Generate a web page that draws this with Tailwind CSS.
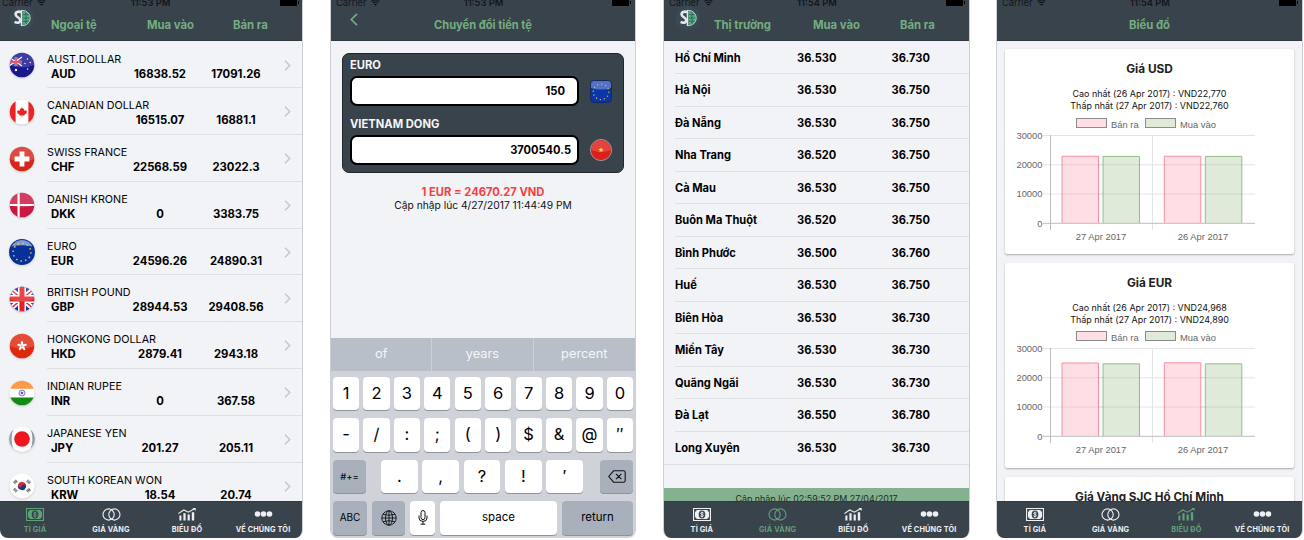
<!DOCTYPE html>
<html lang="vi">
<head>
<meta charset="utf-8">
<title>Tỉ giá</title>
<script src="https://cdn.jsdelivr.net/npm/@tailwindcss/browser@4"></script>
</head>
<body class="w-[1304px] h-[540px] overflow-hidden bg-white font-['Inter','Liberation_Sans',sans-serif] text-black">

<svg width="0" height="0" class="absolute">
  <defs>
    <clipPath id="round"><circle cx="13" cy="13" r="12.3"/></clipPath>
    <symbol id="star" viewBox="-10 -10 20 20"><path d="M0-9.5 2.2-3H9L3.6 1.1 5.6 7.7 0 3.7-5.6 7.7-3.6 1.1-9-3H-2.2Z"/></symbol>
    <symbol id="i-cash" viewBox="0 0 18 13"><path fill="currentColor" fill-rule="evenodd" d="M0 0H18V13H0ZM1.1 1.1V11.9H16.9V1.1Z"/><path fill="currentColor" d="M3.6 2H14.4A1.8 1.8 0 0 0 16 3.7V9.3A1.8 1.8 0 0 0 14.4 11H3.6A1.8 1.8 0 0 0 2 9.3V3.7A1.8 1.8 0 0 0 3.6 2Z"/><ellipse cx="9" cy="6.5" rx="3.3" ry="4.1" fill="#39434c"/><path d="M10.6 5.2C10.2 4.1 7.6 4.2 7.7 5.4 7.8 6.6 10.4 6.3 10.4 7.6 10.3 8.8 7.8 8.8 7.4 7.8M9 3.6V9.5" stroke="currentColor" stroke-width=".9" fill="none"/></symbol>
    <symbol id="i-rings" viewBox="0 0 19 13"><g fill="none" stroke="currentColor" stroke-width="1.1"><circle cx="6.6" cy="6.5" r="5.6"/><circle cx="12.4" cy="6.5" r="5.6"/></g></symbol>
    <symbol id="i-chart" viewBox="0 0 18 13"><path d="M.3 5.6 5.8 2 10.4 4.2 16.4.8" fill="none" stroke="currentColor" stroke-width="1.1"/><path d="M14.4 0H17.7V2.9Z" fill="currentColor"/><path d="M1.4 7.4H3.4V12.6H1.4ZM5.4 5.2H7.6V12.6H5.4ZM9.6 6.4H11.8V12.6H9.6ZM13.8 4.2H16.2V12.6H13.8Z" fill="currentColor"/></symbol>
    <symbol id="i-dots" viewBox="0 0 18 6"><g fill="currentColor"><circle cx="3" cy="3" r="2.8"/><circle cx="9" cy="3" r="2.8"/><circle cx="15" cy="3" r="2.8"/></g></symbol>
    <symbol id="i-logo" viewBox="0 0 26 26"><circle cx="13" cy="13" r="12.3" fill="#3a4a54"/><path d="M13.6 6A7 7 0 0 1 13.6 20Z" fill="#4fae81"/><path d="M14 9.6H20M14 13H20.6M14 16.4H20M17 7V19.2" stroke="#2c5c4d" stroke-width=".8"/><path d="M12.5 5.4H13.6A7.5 7.5 0 0 1 13.6 20.6H12.5" stroke="#c9d6d2" stroke-width="1" fill="none"/><path d="M12 7.3C9.6 6 6.4 6.8 6.6 9.5 6.8 12.4 11.3 12.2 11.2 15.3 11.1 18.2 8 18.2 5.6 16.8" stroke="#e4e8e8" stroke-width="2.6" fill="none"/><path d="M12.5 5V21" stroke="#e4e8e8" stroke-width="1.5"/></symbol>
    <symbol id="i-wifi" viewBox="0 0 9 7"><path d="M.6 2.6A5.6 5.6 0 0 1 8.4 2.6M2.2 4.2A3.4 3.4 0 0 1 6.8 4.2" fill="none" stroke="#12161a" stroke-width="1.2"/><path d="M3.2 5.1H5.8L4.5 6.8Z"/></symbol>

    <symbol id="f-aud" viewBox="0 0 26 26"><g clip-path="url(#round)"><path fill="#16188c" d="M0 0H26V26H0Z"/><path d="M0 5 13 14M13 5 0 14" stroke="#fff" stroke-width="1.2"/><path d="M0 10H13M7 5V14" stroke="#f6c9d2" stroke-width="2.6"/><path d="M0 10H13M7 5V14" stroke="#e0354a" stroke-width="1.8"/><g fill="#fff"><circle cx="7" cy="18" r="1.2"/><circle cx="18.5" cy="7" r=".7"/><circle cx="16" cy="11.5" r=".7"/><circle cx="21.3" cy="10.5" r=".7"/><circle cx="18.6" cy="17" r=".8"/></g></g></symbol>
    <symbol id="f-cad" viewBox="0 0 26 26"><g clip-path="url(#round)"><path fill="#fff" d="M0 0H26V26H0Z"/><path fill="#ee2222" d="M0 0H6.6V26H0ZM19.4 0H26V26H19.4Z"/><path fill="#e62222" d="M13 8 14 10 15.2 9.4 14.8 12 16.3 10.9 16.7 11.8 18 11.7 17.4 13.4 18 13.9 15.3 15.8 15.5 16.7 13.3 16.3V18.4H12.7V16.3L10.5 16.7 10.7 15.8 8 13.9 8.6 13.4 8 11.7 9.3 11.8 9.7 10.9 11.2 12 10.8 9.4 12 10Z"/></g></symbol>
    <symbol id="f-chf" viewBox="0 0 26 26"><g clip-path="url(#round)"><path fill="#d5281d" d="M0 0H26V26H0Z"/><path d="M5.6 13H20.4M13 5.6V20.4" stroke="#fff" stroke-width="4.8"/></g></symbol>
    <symbol id="f-dkk" viewBox="0 0 26 26"><g clip-path="url(#round)"><path fill="#cb163f" d="M0 0H26V26H0Z"/><path d="M0 13H26M9.6 0V26" stroke="#fff" stroke-width="2.2"/></g></symbol>
    <symbol id="f-eur" viewBox="0 0 26 26"><circle cx="13" cy="13" r="13" fill="#07309b"/><path d="M2.6 7.6A11.5 11.5 0 0 1 23.4 7.6Q13 5 2.6 7.6Z" fill="#fff" opacity=".5"/><circle cx="13" cy="13.2" r="8.9" fill="none" stroke="#e2c94a" stroke-width="1.5" stroke-dasharray="1.5 3.16"/></symbol>
    <symbol id="f-gbp" viewBox="0 0 26 26"><g clip-path="url(#round)"><path fill="#2430a6" d="M0 0H26V26H0Z"/><path d="M0 2 26 24M26 2 0 24" stroke="#fff" stroke-width="5"/><path d="M0 2 26 24M26 2 0 24" stroke="#e22a35" stroke-width="1.4"/><path d="M0 13H26M13 0V26" stroke="#fff" stroke-width="8"/><path d="M0 13H26M13 0V26" stroke="#e12225" stroke-width="5"/></g></symbol>
    <symbol id="f-hkd" viewBox="0 0 26 26"><g clip-path="url(#round)"><path fill="#e0280f" d="M0 0H26V26H0Z"/></g><g fill="#fff"><ellipse cx="13" cy="10.4" rx="1.2" ry="2.4"/><ellipse cx="13" cy="10.4" rx="1.2" ry="2.4" transform="rotate(72 13 13)"/><ellipse cx="13" cy="10.4" rx="1.2" ry="2.4" transform="rotate(144 13 13)"/><ellipse cx="13" cy="10.4" rx="1.2" ry="2.4" transform="rotate(216 13 13)"/><ellipse cx="13" cy="10.4" rx="1.2" ry="2.4" transform="rotate(288 13 13)"/></g><circle cx="13" cy="13" r=".6" fill="#e0280f"/></symbol>
    <symbol id="f-inr" viewBox="0 0 26 26"><g clip-path="url(#round)"><path fill="#fff" d="M0 0H26V26H0Z"/><path fill="#fb9a45" d="M0 0H26V8.8H0Z"/><path fill="#138a15" d="M0 17.4H26V26H0Z"/></g><circle cx="13" cy="13" r="3" fill="#dcdcf3" stroke="#6a6ab8" stroke-width=".8"/><circle cx="13" cy="13" r="1.1" fill="#39399c"/></symbol>
    <symbol id="f-jpy" viewBox="0 0 26 26"><circle cx="13" cy="13" r="12.8" fill="#fbfbfb"/><path d="M4.6 3.4A12.6 12.6 0 0 0 4.6 22.6L3.2 19Q2 13 3.2 7ZM21.4 3.4A12.6 12.6 0 0 1 21.4 22.6L22.8 19Q24 13 22.8 7Z" fill="#8d9aa6"/><circle cx="13" cy="13" r="7.8" fill="#ee1420"/></symbol>
    <symbol id="f-krw" viewBox="0 0 26 26"><circle cx="13" cy="13" r="12.5" fill="#fff"/><g transform="rotate(20 13 13)"><path d="M8.9 13A4.1 4.1 0 0 1 17.1 13Z" fill="#d92b3f"/><path d="M8.9 13A4.1 4.1 0 0 0 17.1 13Z" fill="#153b88"/><circle cx="11" cy="13" r="2" fill="#d92b3f"/><circle cx="15" cy="13" r="2" fill="#153b88"/></g><g stroke="#555" stroke-width="3" stroke-dasharray=".9 .5"><path d="M5 10.2 7.8 7.6M18.2 7.6 21 10.2M5 15.9 7.8 18.5M18.2 18.5 21 15.9"/></g></symbol>
    <symbol id="f-vnd" viewBox="0 0 26 26"><circle cx="13" cy="13" r="12.5" fill="#dc1f1a" stroke="#a9a3a4"/><path d="M1.5 13A11.5 11.5 0 0 1 24.5 13Q13 18 1.5 13Z" fill="#fff" opacity=".17"/><use href="#star" x="9.5" y="9.5" width="7" height="7" fill="#ffea1c"/></symbol>
    <symbol id="f-gloss" viewBox="0 0 26 26"><path d="M.7 13A12.3 12.3 0 0 1 25.3 13Q13 18 .7 13Z" fill="#fff" opacity=".17"/></symbol>
  </defs>
</svg>

<main class="flex h-[538px] w-[1303px] gap-[27px]">

  <section class="flex w-[303px] shrink-0 justify-end overflow-hidden rounded-b-[8px] border-r border-[#ccd0d4] bg-[#f2f3f6]">
    <div class="-mr-px flex w-[306px] shrink-0 flex-col">
      <header data-bar="11:53 PM" class="relative h-[41px] shrink-0 border-b border-[#303a42] bg-[#39434c]">
        <svg class="absolute left-[12px] top-[5px] size-[26px]"><use href="#i-logo"/></svg>
        <div class="flex pt-[17px] pl-[54px] text-[11.3px] leading-4 font-bold text-[#74ad80]"><span class="w-[96px]">Ngoại tệ</span><span class="w-[86px]">Mua vào</span><span>Bán ra</span></div>
      </header>
      <div id="rates" class="min-h-0 flex-1 overflow-hidden pt-[0.5px]"></div>
      <nav data-active="0"></nav>
    </div>
  </section>

  <section class="flex w-[306px] shrink-0 flex-col overflow-hidden rounded-b-[8px] border-x border-[#ccd0d4] bg-[#f2f3f6]">
    <header data-bar="11:53 PM" class="relative h-[41px] shrink-0 border-b border-[#303a42] bg-[#39434c]">
      <svg class="absolute left-[19px] top-[13px] h-[13px] w-[8px]" viewBox="0 0 8 13"><path d="M7 .9 1.3 6.5 7 12.1" fill="none" stroke="#74ad80" stroke-width="1.7"/></svg>
      <div class="pt-[17px] text-center text-[11.1px] leading-4 font-bold text-[#74ad80]">Chuyển đổi tiền tệ</div>
    </header>
    <div class="mx-[11px] mt-[12px] h-[120px] shrink-0 rounded-[7px] border border-[#20272d] bg-[#39434c] px-[7px] pt-[3px] text-[11.2px] font-bold">
      <div class="h-[19px] leading-[17px] text-[#f4f6f8]">EURO</div>
      <div class="flex items-center gap-[11px]">
        <div class="h-[30px] w-[229px] rounded-[7px] border-2 border-black bg-white pr-[12px] text-right leading-[26px]">150</div>
        <svg class="h-[23px] w-[22px]" viewBox="0 0 22 23"><rect x=".5" y=".5" width="21" height="22" rx="4" fill="#0a37a8" stroke="#14285f"/><path d="M1 8V4Q1 1 4 1H18Q21 1 21 4V8Q11 11 1 8Z" fill="#fff" opacity=".3"/><circle cx="11" cy="11.8" r="7.8" fill="none" stroke="#ddc04a" stroke-width="1.2" stroke-dasharray="1.2 2.88"/></svg>
      </div>
      <div class="mt-[10px] h-[19px] leading-[17px] text-[#f4f6f8]">VIETNAM DONG</div>
      <div class="flex items-center gap-[11px]">
        <div class="h-[30px] w-[229px] rounded-[7px] border-2 border-black bg-white pr-[6px] text-right text-[11.1px] leading-[26px]">3700540.5</div>
        <svg class="size-[22px]"><use href="#f-vnd"/></svg>
      </div>
    </div>
    <div class="mt-[12px] text-center text-[11.2px] leading-[14px] font-bold text-[#f6403f]">1 EUR = 24670.27 VND</div>
    <div class="text-center text-[10.25px] leading-[13px] text-[#111]">Cập nhập lúc 4/27/2017 11:44:49 PM</div>
    <div class="mt-auto flex h-[33px] shrink-0 bg-[#b8bfc8] text-center text-[12.8px] leading-[31px] text-[#f4f6f8]">
      <span class="w-[101px]">of</span><span class="w-[103px] border-x border-[#cbd1d8]">years</span><span class="w-[102px]">percent</span>
    </div>
    <div id="keys" class="flex h-[167px] shrink-0 flex-col gap-[8px] bg-[#cfd2d9] px-[2px] pt-[6px] text-[16.5px] leading-[33px]"></div>
  </section>

  <section class="flex w-[307px] shrink-0 flex-col overflow-hidden rounded-b-[8px] border-x border-[#ccd0d4] bg-[#f2f3f6]">
    <header data-bar="11:54 PM" class="relative h-[41px] shrink-0 border-b border-[#303a42] bg-[#39434c]">
      <svg class="absolute left-[11px] top-[5px] size-[26px]"><use href="#i-logo"/></svg>
      <div class="flex pt-[17px] pl-[50px] text-[11.3px] leading-4 font-bold text-[#74ad80]"><span class="w-[99px]">Thị trường</span><span class="w-[87px]">Mua vào</span><span>Bán ra</span></div>
    </header>
    <div id="gold" class="h-[423.5px] shrink-0 border-b border-[#dddfe2] pt-[0.5px]"></div>
    <div class="mt-auto h-[13px] shrink-0 overflow-hidden bg-[#84b290] text-center text-[8.9px] leading-[22px] text-[#202b25]">Cập nhập lúc 02:59:52 PM 27/04/2017</div>
    <nav data-active="1"></nav>
  </section>

  <section class="-ml-px flex w-[307px] shrink-0 flex-col overflow-hidden rounded-b-[8px] border-x border-[#ccd0d4] bg-[#f2f3f6]">
    <header data-bar="11:54 PM" class="relative h-[41px] shrink-0 border-b border-[#303a42] bg-[#39434c]">
      <div class="pt-[17px] text-center text-[11.3px] leading-4 font-bold text-[#74ad80]">Biểu đồ</div>
    </header>
    <div id="charts" class="flex min-h-0 flex-1 flex-col gap-[9px] overflow-hidden px-[8px] pt-[8.4px]"></div>
    <nav data-active="2"></nav>
  </section>
</main>

<script>
const $ = s => document.querySelector(s), all = s => document.querySelectorAll(s);

all('[data-bar]').forEach(h => h.insertAdjacentHTML('beforeend', `
  <div class="absolute inset-x-0 -top-[3.5px] flex h-[12px] items-center justify-between pl-[5px] pr-[4px] text-[9.3px] leading-[12px] text-[#12161a]">
    <span class="flex w-[80px] items-center gap-[5px]">Carrier<svg class="h-[7px] w-[9px]"><use href="#i-wifi"/></svg></span>
    <span class="font-semibold">${h.dataset.bar}</span>
    <span class="flex w-[80px] items-center justify-end gap-px"><i class="block h-[7px] w-[17px] rounded-[1px] bg-black"></i><i class="block h-[3px] w-[1px] bg-black"></i></span>
  </div>`));

const tabs = [['i-cash','TỈ GIÁ','h-[13px] w-[18px]'],['i-rings','GIÁ VÀNG','h-[13px] w-[19px]'],['i-chart','BIỂU ĐỒ','h-[13px] w-[18px]'],['i-dots','VỀ CHÚNG TÔI','h-[6px] w-[19px]']];
all('nav').forEach(n => {
  n.className = 'grid h-[37px] shrink-0 grid-cols-4 border-t border-[#303a42] bg-[#39434c] pr-[2px]';
  n.innerHTML = tabs.map(([i, t, c], k) => `<div class="flex flex-col items-center ${k == n.dataset.active ? 'text-[#5fa079]' : 'text-[#eef0f2]'}"><div class="mt-[5px] flex h-[14px] items-center"><svg class="${c}"><use href="#${i}"/></svg></div><span class="mt-[4px] whitespace-nowrap text-[7.3px] leading-[10px] font-bold tracking-[0.15px]">${t}</span></div>`).join('');
});

$('#rates').innerHTML = [
  ['aud','AUST.DOLLAR','16838.52','17091.26'],['cad','CANADIAN DOLLAR','16515.07','16881.1'],['chf','SWISS FRANCE','22568.59','23022.3'],
  ['dkk','DANISH KRONE','0','3383.75'],['eur','EURO','24596.26','24890.31'],['gbp','BRITISH POUND','28944.53','29408.56'],
  ['hkd','HONGKONG DOLLAR','2879.41','2943.18'],['inr','INDIAN RUPEE','0','367.58'],['jpy','JAPANESE YEN','201.27','205.11'],['krw','SOUTH KOREAN WON','18.54','20.74']
].map(([c, n, b, s]) => `<div class="flex h-[46.8px] pl-[12px]">
  <div class="relative mt-[10.5px] mr-[12px] size-[26px]"><svg class="size-[26px] drop-shadow-[0_1px_1px_rgba(0,0,0,0.15)]"><use href="#f-${c}"/></svg>${['inr','jpy','krw','cad','eur'].includes(c) ? '' : '<svg class="absolute inset-0 size-[26px]"><use href="#f-gloss"/></svg>'}</div>
  <div class="relative flex-1 border-b border-[#dddfe2] pt-[10px] leading-[15px]">
    <div class="text-[10.75px]">${n}</div>
    <div class="flex pl-[4px] text-[11.3px] font-bold"><span class="w-[71px]">${c.toUpperCase()}</span><span class="w-[76px] text-center">${b}</span><span class="w-[76px] text-center">${s}</span></div>
    <svg class="absolute right-[12px] top-[18px] h-[11px] w-[7px]" viewBox="0 0 7 11"><path d="M1 .8 5.8 5.5 1 10.2" fill="none" stroke="#c3c5c9" stroke-width="1.4"/></svg>
  </div></div>`).join('');

$('#gold').innerHTML = [
  ['Hồ Chí Minh',530,730],['Hà Nội',530,750],['Đà Nẵng',530,750],['Nha Trang',520,750],['Cà Mau',530,750],['Buôn Ma Thuột',520,750],['Bình Phước',500,760],
  ['Huế',530,750],['Biên Hòa',530,730],['Miền Tây',530,730],['Quãng Ngãi',530,730],['Đà Lạt',550,780],['Long Xuyên',530,730]
].map(([n, b, s], i, a) => `<div class="ml-[11px] flex h-[32.5px] text-[11.1px] leading-[33px] font-bold ${i < a.length - 1 ? 'border-b border-[#dddfe2]' : ''}"><span class="w-[122px]">${n}</span><span class="w-[94.5px]">36.${b}</span><span>36.${s}</span></div>`).join('');

const white = 'rounded-[4px] bg-white text-center shadow-[0_1px_0_#8e9299]', gray = 'rounded-[4px] bg-[#a8b0bb] text-center shadow-[0_1px_0_#8e9299]';
const keyRow = s => `<div class="grid h-[33.4px] shrink-0 grid-cols-10 gap-[4.3px]">${s.map(k => `<div class="${white}">${k}</div>`).join('')}</div>`;
$('#keys').innerHTML = keyRow([...'1234567890']) + keyRow(['-','/',':',';','(',')','$','&amp;','@','″']) +
  `<div class="flex h-[33.4px] shrink-0"><div class="${gray} w-[33px] text-[9.5px]">#+=</div><div class="ml-[15px] mr-[17px] grid flex-1 grid-cols-5 gap-[4.3px]">${['.',',','?','!','′'].map(k => `<div class="${white}">${k}</div>`).join('')}</div>
   <div class="${gray} flex w-[33px] items-center justify-center"><svg class="h-[13px] w-[18px]" viewBox="0 0 18 13"><path d="M5.6 .8H15.4Q17.2 .8 17.2 2.6V10.4Q17.2 12.2 15.4 12.2H5.6L.8 6.5ZM8 3.8 13.4 9.2M13.4 3.8 8 9.2" fill="none" stroke="#111" stroke-width="1.1"/></svg></div></div>
   <div class="flex h-[33.4px] shrink-0 text-[11.5px]"><div class="${gray} w-[34px] text-[10px]">ABC</div>
   <div class="${gray} ml-[5px] flex w-[33px] items-center justify-center"><svg class="size-[16px]" viewBox="0 0 16 16" fill="none" stroke="#111" stroke-width=".9"><circle cx="8" cy="8" r="7.2"/><ellipse cx="8" cy="8" rx="3.5" ry="7.2"/><path d="M8 .8V15.2M.8 8H15.2M2 4.3Q8 6.3 14 4.3M2 11.7Q8 9.7 14 11.7"/></svg></div>
   <div class="${white} ml-[5px] flex w-[25px] items-center justify-center"><svg class="h-[15px] w-[10px]" viewBox="0 0 10 15" fill="none" stroke="#111"><rect x="3" y=".6" width="4" height="9" rx="2"/><path d="M1 5.5V8Q1 11.4 5 11.4T9 8V5.5M5 11.4V14M2.6 14.2H7.4"/></svg></div>
   <div class="${white} ml-[5px] w-[117px]">space</div><div class="${gray} ml-[5px] flex-1">return</div></div>`;

// Chart card: value axis runs 0..30000 over 88px
const card = (title, hi, lo, vals) => {
  const bar = (x, v, f, s) => `<path d="M${x} 103V${103 - v / 30000 * 88}H${x + 36.5}V103" fill="${f}" stroke="${s}"/>`;
  return `<article class="h-[204.6px] shrink-0 rounded-[2px] bg-white pt-[11px] text-center shadow-[0_1px_2px_rgba(0,0,0,0.3)]">
    <h2 class="text-[11.8px] leading-[18px] font-bold text-[#222]">${title}</h2>
    <div class="mt-[10px] text-[8.95px] leading-[11.9px] text-[#111]">${hi}<br>${lo}</div>
    <svg class="mt-[7.5px] block h-[135px] w-[289px] overflow-visible font-['Liberation_Sans',sans-serif]" viewBox="0 0 289 135" font-size="9.4" fill="#666">
      <g stroke="#8c8c8c"><rect x="71.5" y="-1.5" width="30" height="9" fill="#ffdfe5"/><rect x="140.5" y="-1.5" width="30" height="9" fill="#dfead9"/></g>
      <text x="106" y="7.5">Bán ra</text><text x="175" y="7.5">Mua vào</text>
      <g stroke="#e4e4e4"><path d="M38 15.5H250M38 44.8H250M38 74H250M147.5 15V110"/></g>
      ${bar(57, vals[0], '#ffdfe5', '#fb8da4')}${bar(98, vals[1], '#dfead9', '#93bf85')}${bar(159.3, vals[2], '#ffdfe5', '#fb8da4')}${bar(200.3, vals[3], '#dfead9', '#93bf85')}
      <g stroke="#000" stroke-opacity=".08"><path d="M57 44.8H135M57 74H135M159 44.8H237M159 74H237"/></g>
      <path d="M38 103.3H250M45.5 15V110" fill="none" stroke="#bdbdbd"/>
      <g text-anchor="end"><text x="37.5" y="18.5">30000</text><text x="37.5" y="48">20000</text><text x="37.5" y="77">10000</text><text x="37.5" y="106.5">0</text></g>
      <g text-anchor="middle"><text x="96" y="119.5">27 Apr 2017</text><text x="198" y="119.5">26 Apr 2017</text></g>
    </svg></article>`;
};
$('#charts').innerHTML =
  card('Giá USD', 'Cao nhất (26 Apr 2017) : VND22,770', 'Thấp nhất (27 Apr 2017) : VND22,760', [22760, 22700, 22770, 22700]) +
  card('Giá EUR', 'Cao nhất (26 Apr 2017) : VND24,968', 'Thấp nhất (27 Apr 2017) : VND24,890', [24890, 24600, 24968, 24600]) +
  `<article class="h-[60px] shrink-0 rounded-[2px] bg-white pt-[11px] text-center text-[11.7px] leading-[18px] font-bold text-[#222] shadow-[0_1px_2px_rgba(0,0,0,0.3)]">Giá Vàng SJC Hồ Chí Minh</article>`;
</script>
</body>
</html>
